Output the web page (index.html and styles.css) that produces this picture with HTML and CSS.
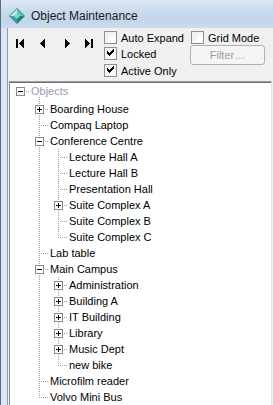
FILE: index.html
```html
<!DOCTYPE html>
<html>
<head>
<meta charset="utf-8">
<link rel="stylesheet" href="styles.css">
</head>
<body>
<div class="window">
  <div class="titlebar">
    <svg class="app-icon" width="16" height="16" viewBox="0 0 16 16">
      <polygon points="8,0 16,8 8,16 0,8" fill="#2a8682"/>
      <polygon points="8,1 8,8 1,8" fill="#b4ece6"/>
      <polygon points="8,1 15,8 8,8" fill="#5cc2ba"/>
      <polygon points="1,8 8,8 8,15" fill="#3ea59e"/>
      <polygon points="15,8 8,15 8,8" fill="#24807b"/>
      <polygon points="8,5 11,8 8,11 5,8" fill="#7fd6cd"/>
    </svg>
    <span class="title">Object Maintenance</span>
  </div>
  <div class="frame">
    <div class="client">
      <div class="toolbar">
        <div class="nav">
          <button class="nav-btn" type="button" aria-label="First">
            <svg width="8" height="9" viewBox="0 0 8 9"><path d="M0 0h2v9H0z M3 4h1v1H3z M4 3h1v3H4z M5 2h1v5H5z M6 1h1v7H6z M7 0h1v9H7z" fill="#000"/></svg>
          </button>
          <button class="nav-btn" type="button" aria-label="Previous">
            <svg width="5" height="9" viewBox="0 0 5 9"><path d="M0 4h1v1H0z M1 3h1v3H1z M2 2h1v5H2z M3 1h1v7H3z M4 0h1v9H4z" fill="#000"/></svg>
          </button>
          <button class="nav-btn gap" type="button" aria-label="Next">
            <svg width="5" height="9" viewBox="0 0 5 9"><path d="M0 0h1v9H0z M1 1h1v7H1z M2 2h1v5H2z M3 3h1v3H3z M4 4h1v1H4z" fill="#000"/></svg>
          </button>
          <button class="nav-btn" type="button" aria-label="Last">
            <svg width="8" height="9" viewBox="0 0 8 9"><path d="M0 0h1v9H0z M1 1h1v7H1z M2 2h1v5H2z M3 3h1v3H3z M4 4h1v1H4z M6 0h2v9H6z" fill="#000"/></svg>
          </button>
        </div>
        <div class="checks">
          <div class="check r1"><span class="box"></span><span>Auto Expand</span></div>
          <div class="check r2"><span class="box on"></span><span>Locked</span></div>
          <div class="check r2"><span class="box on"></span><span>Active Only</span></div>
        </div>
        <div class="col2">
          <div class="check r1"><span class="box"></span><span>Grid Mode</span></div>
          <button class="filter" type="button" disabled>Filter…</button>
        </div>
      </div>
      <div class="tree">
        <div class="row root"><span class="cell root-line"><span class="exp minus"></span></span><span class="label muted">Objects</span></div>
        <div class="row"><span class="cell"></span><span class="cell tee"><span class="exp plus"></span></span><span class="label">Boarding House</span></div>
        <div class="row"><span class="cell"></span><span class="cell tee"></span><span class="label">Compaq Laptop</span></div>
        <div class="row"><span class="cell"></span><span class="cell tee"><span class="exp minus"></span></span><span class="label">Conference Centre</span></div>
        <div class="row"><span class="cell"></span><span class="cell pipe"></span><span class="cell tee"></span><span class="label">Lecture Hall A</span></div>
        <div class="row"><span class="cell"></span><span class="cell pipe"></span><span class="cell tee"></span><span class="label">Lecture Hall B</span></div>
        <div class="row"><span class="cell"></span><span class="cell pipe"></span><span class="cell tee"></span><span class="label">Presentation Hall</span></div>
        <div class="row"><span class="cell"></span><span class="cell pipe"></span><span class="cell tee"><span class="exp plus"></span></span><span class="label">Suite Complex A</span></div>
        <div class="row"><span class="cell"></span><span class="cell pipe"></span><span class="cell tee"></span><span class="label">Suite Complex B</span></div>
        <div class="row"><span class="cell"></span><span class="cell pipe"></span><span class="cell ell"></span><span class="label">Suite Complex C</span></div>
        <div class="row"><span class="cell"></span><span class="cell tee"></span><span class="label">Lab table</span></div>
        <div class="row"><span class="cell"></span><span class="cell tee"><span class="exp minus"></span></span><span class="label">Main Campus</span></div>
        <div class="row"><span class="cell"></span><span class="cell pipe"></span><span class="cell tee"><span class="exp plus"></span></span><span class="label">Administration</span></div>
        <div class="row"><span class="cell"></span><span class="cell pipe"></span><span class="cell tee"><span class="exp plus"></span></span><span class="label">Building A</span></div>
        <div class="row"><span class="cell"></span><span class="cell pipe"></span><span class="cell tee"><span class="exp plus"></span></span><span class="label">IT Building</span></div>
        <div class="row"><span class="cell"></span><span class="cell pipe"></span><span class="cell tee"><span class="exp plus"></span></span><span class="label">Library</span></div>
        <div class="row"><span class="cell"></span><span class="cell pipe"></span><span class="cell tee"><span class="exp plus"></span></span><span class="label">Music Dept</span></div>
        <div class="row"><span class="cell"></span><span class="cell pipe"></span><span class="cell ell"></span><span class="label">new bike</span></div>
        <div class="row"><span class="cell"></span><span class="cell tee"></span><span class="label">Microfilm reader</span></div>
        <div class="row"><span class="cell"></span><span class="cell ell"></span><span class="label">Volvo Mini Bus</span></div>
      </div>
    </div>
  </div>
</div>
</body>
</html>
```

FILE: styles.css
```css
* { box-sizing: border-box; margin: 0; padding: 0; }
html, body { width: 273px; height: 405px; overflow: hidden; }
body {
  font-family: "Liberation Sans", Arial, sans-serif;
  font-size: 11px;
  color: #000;
  background: #f0f0f0;
}
.window {
  width: 273px;
  height: 405px;
  display: flex;
  flex-direction: column;
  border-left: 1px solid #5d6a7a;
  background: #d8e6f5;
}
.titlebar {
  height: 28px;
  flex: none;
  display: flex;
  align-items: flex-start;
  padding: 8px 0 0 8px;
  gap: 6px;
  background: linear-gradient(#dee8f4 0, #c8d9ed 45%, #c4d6eb 75%, #cbdbee 100%);
}
.app-icon { flex: none; display: block; }
.title {
  font-size: 12px;
  line-height: 16px;
  color: #1a1a1a;
  white-space: nowrap;
}
.frame {
  flex: 1;
  display: flex;
  padding-left: 6px;
  min-height: 0;
}
.client {
  flex: 1;
  display: flex;
  flex-direction: column;
  border-left: 1px solid #8f9cab;
  background: #f0f0f0;
  min-height: 0;
}
.toolbar {
  height: 53px;
  flex: none;
  display: flex;
  align-items: flex-start;
}
.nav {
  display: flex;
  padding: 11px 0 0 1px;
}
.nav-btn {
  width: 22px;
  height: 9px;
  border: 0;
  background: transparent;
  display: flex;
  justify-content: center;
  align-items: flex-start;
  font: inherit;
}
.nav-btn.gap { margin-left: 3px; }
.nav-btn svg { display: block; }
.checks {
  width: 86px;
  margin-left: 4px;
  padding-top: 2px;
  display: flex;
  flex-direction: column;
}
.check {
  display: flex;
  align-items: center;
  gap: 4px;
  white-space: nowrap;
}
.check.r1 { height: 15px; }
.check.r2 { height: 17px; }
.box {
  width: 13px;
  height: 13px;
  flex: none;
  border: 1px solid #8e8f8f;
  background: linear-gradient(135deg, #e6e6e6, #ffffff 70%);
  box-shadow: inset 0 0 0 1px #f4f4f4;
}
.box.on {
  background:
    linear-gradient(#000, #000) 2px 3px / 1px 3px no-repeat,
    linear-gradient(#000, #000) 3px 4px / 1px 3px no-repeat,
    linear-gradient(#000, #000) 4px 5px / 1px 3px no-repeat,
    linear-gradient(#000, #000) 5px 4px / 1px 3px no-repeat,
    linear-gradient(#000, #000) 6px 3px / 1px 3px no-repeat,
    linear-gradient(#000, #000) 7px 2px / 1px 3px no-repeat,
    linear-gradient(#000, #000) 8px 1px / 1px 3px no-repeat,
    linear-gradient(135deg, #e6e6e6, #ffffff 70%);
}
.col2 {
  padding-top: 2px;
  display: flex;
  flex-direction: column;
}
.col2 .check { padding-left: 1px; }
.filter {
  width: 75px;
  height: 20px;
  border: 1px solid #adb2b5;
  border-radius: 3px;
  background: #f4f4f4;
  color: #a0a0a0;
  font: inherit;
  font-size: 11px;
  display: flex;
  align-items: center;
  justify-content: center;
}
.tree {
  flex: 1;
  margin: 0 1px 0 1px;
  background: #fff;
  border-top: 1px solid #a0a0a0;
  border-left: 1px solid #8c8c8c;
  border-right: 1px solid #e3e3e3;
  box-shadow: inset 0 1px 0 #6e6e6e;
  padding-top: 1px;
  overflow: hidden;
}
.row {
  display: flex;
  height: 16px;
}
.row.root {
  height: 18px;
  background: repeating-linear-gradient(to bottom, #a0a0a0 0 1px, transparent 1px 2px) 29px 14px / 1px 4px no-repeat;
}
.cell {
  width: 19px;
  height: 16px;
  flex: none;
  display: flex;
  align-items: flex-start;
}
.cell.root-line {
  background: repeating-linear-gradient(to right, #a0a0a0 0 1px, transparent 1px 2px) 10px 8px / 9px 1px no-repeat;
}
.cell.pipe {
  background: repeating-linear-gradient(to bottom, #a0a0a0 0 1px, transparent 1px 2px) 10px 0 / 1px 16px no-repeat;
}
.cell.tee {
  background:
    repeating-linear-gradient(to bottom, #a0a0a0 0 1px, transparent 1px 2px) 10px 0 / 1px 16px no-repeat,
    repeating-linear-gradient(to right, #a0a0a0 0 1px, transparent 1px 2px) 10px 8px / 9px 1px no-repeat;
}
.cell.ell {
  background:
    repeating-linear-gradient(to bottom, #a0a0a0 0 1px, transparent 1px 2px) 10px 0 / 1px 9px no-repeat,
    repeating-linear-gradient(to right, #a0a0a0 0 1px, transparent 1px 2px) 10px 8px / 9px 1px no-repeat;
}
.exp {
  width: 9px;
  height: 9px;
  margin: 4px 0 0 6px;
  border: 1px solid #8a8a8a;
  background-color: #fff;
}
.exp.minus {
  background: linear-gradient(#000, #000) 1px 3px / 5px 1px no-repeat, #fff;
}
.exp.plus {
  background:
    linear-gradient(#000, #000) 1px 3px / 5px 1px no-repeat,
    linear-gradient(#000, #000) 3px 1px / 1px 5px no-repeat,
    #fff;
}
.label {
  padding-left: 2px;
  line-height: 16px;
  height: 16px;
  white-space: nowrap;
}
.label.muted { color: #9a9ab0; }
```
